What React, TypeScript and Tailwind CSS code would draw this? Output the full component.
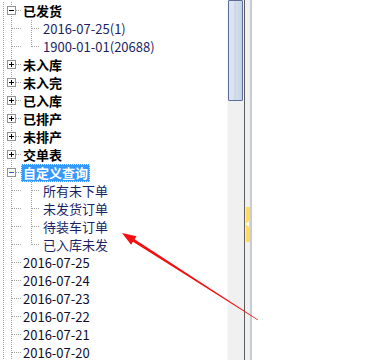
type Row = {
  label: string;
  kind: "parent" | "child" | "leaf";
  open?: boolean;
  last?: boolean;
  selected?: boolean;
};

const rows: Row[] = [
  { label: "已发货", kind: "parent", open: true },
  { label: "2016-07-25(1)", kind: "child" },
  { label: "1900-01-01(20688)", kind: "child", last: true },
  { label: "未入库", kind: "parent" },
  { label: "未入完", kind: "parent" },
  { label: "已入库", kind: "parent" },
  { label: "已排产", kind: "parent" },
  { label: "未排产", kind: "parent" },
  { label: "交单表", kind: "parent" },
  { label: "自定义查询", kind: "parent", open: true, selected: true },
  { label: "所有未下单", kind: "child" },
  { label: "未发货订单", kind: "child" },
  { label: "待装车订单", kind: "child" },
  { label: "已入库未发", kind: "child", last: true },
  { label: "2016-07-25", kind: "leaf" },
  { label: "2016-07-24", kind: "leaf" },
  { label: "2016-07-23", kind: "leaf" },
  { label: "2016-07-22", kind: "leaf" },
  { label: "2016-07-21", kind: "leaf" },
  { label: "2016-07-20", kind: "leaf" },
];

const dot = { stroke: "#a0a0a0", strokeWidth: 1, strokeDasharray: "1 1" };

// guide cell for the top level (box, or straight line for leaves)
function RootGuide({ row }: { row: Row }) {
  return (
    <svg width="21" height="18" viewBox="0 0 21 18" className="shrink-0">
      <line x1="3.5" y1="0" x2="3.5" y2="18" {...dot} />
      <line x1="11.5" y1="0" x2="11.5" y2="18" {...dot} />
      {row.kind === "leaf" && <line x1="12" y1="8.5" x2="21" y2="8.5" {...dot} />}
      {row.kind === "parent" && (
        <>
          <line x1="16" y1="8.5" x2="21" y2="8.5" {...dot} />
          <rect x="7.5" y="4.5" width="8" height="8" fill="#fff" stroke="#919191" />
          <line
            x1="9"
            y1="8.5"
            x2="14"
            y2="8.5"
            stroke={row.selected ? "#1a5fd0" : "#000"}
          />
          {!row.open && <line x1="11.5" y1="6" x2="11.5" y2="11" stroke="#000" />}
        </>
      )}
    </svg>
  );
}

function ChildGuide({ last }: { last?: boolean }) {
  return (
    <svg width="20" height="18" viewBox="0 0 20 18" className="shrink-0">
      <line x1="10.5" y1="0" x2="10.5" y2={last ? 9 : 18} {...dot} />
      <line x1="11" y1="8.5" x2="19" y2="8.5" {...dot} />
    </svg>
  );
}

function TreeRow({ row }: { row: Row }) {
  const bold = row.kind === "parent";
  return (
    <div className="flex h-[18px] items-center">
      <RootGuide row={row.kind === "child" ? { ...row, kind: "leaf", label: "" } : row} />
      {row.kind === "child" && <ChildGuide last={row.last} />}
      <span
        className={
          row.selected
            ? "h-[18px] px-[1px] leading-[16px] whitespace-nowrap bg-[#3399ff] border border-dotted border-[#f3e6c0] text-white font-bold"
            : `h-[18px] px-[2px] leading-[18px] whitespace-nowrap ${
                bold
                  ? "font-bold text-black"
                  : row.kind === "child"
                  ? "text-[#1b1f66]"
                  : "text-[#0e0e2e]"
              }`
        }
      >
        {row.label}
      </span>
    </div>
  );
}

export default function App() {
  return (
    <div
      className="relative flex w-[372px] h-[360px] overflow-hidden bg-white text-[13px]"
      style={{ fontFamily: '"Noto Sans CJK SC", "Noto Sans", sans-serif' }}
    >
      {/* Tree */}
      <div className="w-[227px] shrink-0 overflow-hidden pt-[2px]">
        {rows.map((r, i) => (
          <TreeRow key={i} row={r} />
        ))}
      </div>

      {/* Vertical scrollbar */}
      <div className="w-[17px] shrink-0 bg-[#f0f0f0] border-l border-[#f8f8f8]">
        <div className="w-[15px] h-[101px] rounded-[1px] border border-[#5b6d98] bg-[linear-gradient(90deg,#dbe4f0_0%,#dbe4f0_35%,#c8d5e7_45%,#d3deec_60%,#c4d2e5_100%)]" />
      </div>

      {/* Splitter */}
      <div className="w-[1px] shrink-0 bg-[#5c5c5c]" />
      <div className="w-[5px] shrink-0 bg-[#f0f0f0] pt-[207px]">
        <div className="relative ml-[1px] w-[4px] h-[35px] bg-[#ffd866]">
          <svg width="4" height="6" viewBox="0 0 4 6" className="absolute left-0 top-[14px]">
            <polygon points="0,3 3,0 3,6" fill="#fff" />
          </svg>
        </div>
      </div>
      <div className="w-[2px] shrink-0 bg-[#c6cbd4]" />

      {/* Right pane */}
      <div className="flex-1 bg-white" />

      {/* Red annotation arrow */}
      <svg
        width="372"
        height="360"
        viewBox="0 0 372 360"
        className="absolute left-0 top-0 pointer-events-none"
      >
        <polygon
          points="122,233 136.5,236.3 134.6,239.2 258.2,319.7 257.8,320.3 133,241.8 131.1,244.7"
          fill="#f21010"
        />
      </svg>
    </div>
  );
}
